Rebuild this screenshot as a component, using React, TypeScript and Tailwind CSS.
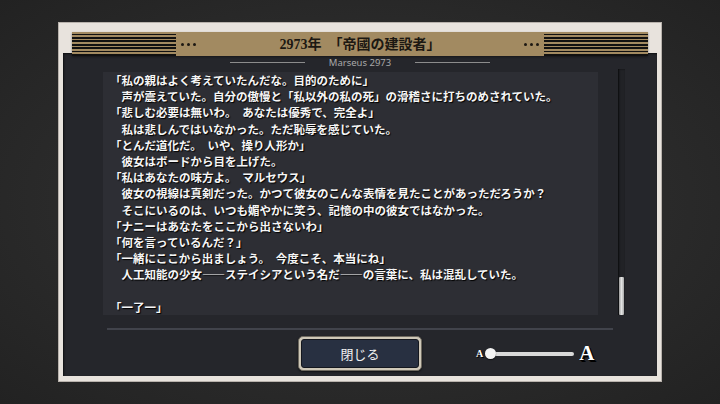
import React from 'react';

const lines = [
  '「私の親はよく考えていたんだな。目的のために」',
  '　声が震えていた。自分の傲慢と「私以外の私の死」の滑稽さに打ちのめされていた。',
  '「悲しむ必要は無いわ。　あなたは優秀で、完全よ」',
  '　私は悲しんではいなかった。ただ恥辱を感じていた。',
  '「とんだ道化だ。　いや、操り人形か」',
  '　彼女はボードから目を上げた。',
  '「私はあなたの味方よ。　マルセウス」',
  '　彼女の視線は真剣だった。かつて彼女のこんな表情を見たことがあっただろうか？',
  '　そこにいるのは、いつも媚やかに笑う、記憶の中の彼女ではなかった。',
  '「ナニーはあなたをここから出さないわ」',
  '「何を言っているんだ？」',
  '「一緒にここから出ましょう。　今度こそ、本当にね」',
  '　人工知能の少女――ステイシアという名だ――の言葉に、私は混乱していた。',
  '',
  '「一了一」',
];

const Stripes = () => (
  <div className="w-[104px] h-full bg-[repeating-linear-gradient(to_bottom,#a28a61_0px,#a28a61_1.6px,#111_1.6px,#111_3.4px)]" />
);

const Dots = () => (
  <div className="flex gap-[3px] items-center">
    <span className="w-[3px] h-[3px] rounded-full bg-[#1c1812]" />
    <span className="w-[3px] h-[3px] rounded-full bg-[#1c1812]" />
    <span className="w-[3px] h-[3px] rounded-full bg-[#1c1812]" />
  </div>
);

export default function App() {
  return (
    <div className="w-[720px] h-[404px] overflow-hidden bg-[radial-gradient(ellipse_at_center,#323232_0%,#2a2a2a_60%,#222_100%)] pt-[22px] pl-[58px]">
      {/* Frame */}
      <div className="w-[604px] h-[360px] bg-[#e8e3dd] border border-[#b8b2ac] pt-[9px] px-[4px] pb-[5px] flex flex-col">
        {/* Title bar */}
        <div className="relative z-10 mx-[9px] h-[24px] bg-[#a28a61] flex items-center shadow-[0_1px_2px_rgba(0,0,0,0.4)]">
          <Stripes />
          <div className="ml-[5px]">
            <Dots />
          </div>
          <div className="flex-1 text-center text-[14px] font-semibold text-[#1c1812] [font-family:'Liberation_Serif','Noto_Sans_CJK_JP',serif]">
            2973年　「帝國の建設者」
          </div>
          <div className="mr-[5px]">
            <Dots />
          </div>
          <Stripes />
        </div>

        {/* Dark panel */}
        <div className="-mt-[3px] flex-1 bg-[#25262b] shadow-[inset_1px_1px_2px_rgba(0,0,0,0.6)] flex flex-col">
          <div className="h-[13px] mt-[3px] flex items-center justify-center gap-[24px]">
            <div className="w-[75px] h-px bg-[#8c8c8c]" />
            <span className="text-[9.5px] leading-none text-[#a8a8a8] [font-family:'Noto_Sans',sans-serif]">Marseus 2973</span>
            <div className="w-[75px] h-px bg-[#8c8c8c]" />
          </div>

          <div className="flex mt-[3px]">
            <div className="ml-[40px] w-[495px] bg-[#2d2e34] pl-[7px]">
              <div className="text-[11.5px] leading-[16.2px] font-bold text-[#f6f6f6] whitespace-pre [text-shadow:1px_1px_1px_#000] [font-family:'Noto_Sans_CJK_JP',sans-serif]">
                {lines.map((l, i) => (
                  <div key={i} className="h-[16.2px]">{l}</div>
                ))}
              </div>
            </div>
            {/* Scrollbar */}
            <div className="ml-[20px] -mt-[3px] w-[7px] h-[246px] bg-[#212226] shadow-[inset_1px_0_2px_rgba(0,0,0,0.7)] flex flex-col justify-end">
              <div className="h-[38px] mx-[1px] bg-[linear-gradient(to_right,#9a9a9a,#e2e2e2,#a8a8a8)] rounded-[1px]" />
            </div>
          </div>

          <div className="mt-[13px] mx-[44px] h-[2px] bg-[#41434b]" />

          <div className="mt-[6px] grid grid-cols-[1fr_auto_1fr] items-center">
            <div />
            <button className="w-[124px] h-[35px] rounded-[5px] bg-[#cfc8b8] border border-[#6f6a60] p-[2px] shadow-[0_1px_2px_rgba(0,0,0,0.6)]">
              <div className="w-full h-full rounded-[3px] bg-[#283041] border border-[#14171e] flex items-center justify-center text-[13px] text-[#f2f2f2] [font-family:'Noto_Sans_CJK_JP',sans-serif]">
                閉じる
              </div>
            </button>
            <div className="pl-[54px] flex items-center">
              <span className="text-[10px] font-bold text-white [text-shadow:1px_1px_0_#000] [font-family:'Liberation_Serif',serif]">A</span>
              <div className="relative ml-[2px] w-[89px] h-[11px] flex items-center">
                <div className="ml-[5px] w-[84px] h-[4px] rounded-full bg-[#d9d9d9]" />
                <div className="absolute left-0 top-0 w-[11px] h-[11px] rounded-full bg-[#f4f4f4] shadow-[0_1px_1px_rgba(0,0,0,0.6)]" />
              </div>
              <span className="ml-[5px] text-[21px] leading-none font-bold text-white [text-shadow:1px_1px_0_#000,2px_2px_0_#000] [font-family:'Liberation_Serif',serif]">A</span>
            </div>
          </div>
        </div>
      </div>
    </div>
  );
}
